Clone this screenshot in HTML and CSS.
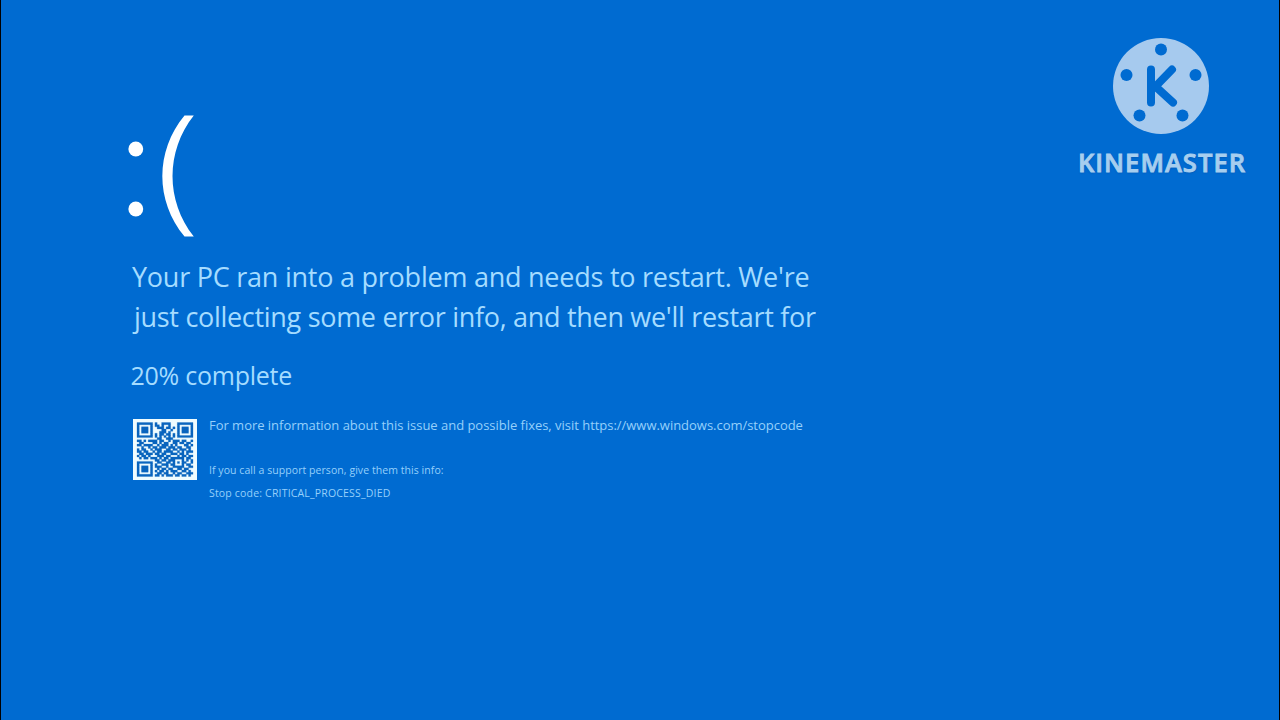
FILE: index.html
```html
<!DOCTYPE html>
<html lang="en">
<head>
<meta charset="utf-8">
<title>Stop screen</title>
<link rel="stylesheet" href="styles.css">
</head>
<body>
<main class="screen">
  <section class="message">
    <svg class="face" viewBox="0 0 70 124" role="img" aria-label="Sad face">
      <circle cx="7.800" cy="35" r="7.400"/><circle cx="7.800" cy="95" r="7.400"/>
      <path d="M56.500 1.500H65.800C37.500 37 37.500 87 65.800 122.500H56.500C27 87 27 37 56.500 1.500Z"/>
    </svg>
    <p class="headline"><span class="line-one">Your PC ran into a problem and needs to restart. We're</span><span class="line-two">just collecting some error info, and then we'll restart for</span></p>
    <p class="progress">20% complete</p>
    <div class="details">
      <svg class="qr" viewBox="0 0 64 61" preserveAspectRatio="none" role="img" aria-label="QR code">
        <rect width="64" height="61"/>
        <path id="modules" class="modules" transform="translate(4 3.500) scale(2.240 2.160)"/>
      </svg>
      <div class="info">
        <p class="visit">For more information about this issue and possible fixes, visit https://www.windows.com/stopcode</p>
        <p class="support">If you call a support person, give them this info:</p>
        <p class="stopcode">Stop code: CRITICAL_PROCESS_DIED</p>
      </div>
    </div>
  </section>
  <aside class="brand">
    <svg class="reel" viewBox="0 0 98 98" aria-hidden="true">
      <circle class="disc" cx="49" cy="49" r="48"/>
      <g class="holes"><circle cx="49" cy="12.500" r="6"/><circle cx="14.500" cy="38" r="6"/><circle cx="83.500" cy="38" r="6"/><circle cx="27.500" cy="78.500" r="6"/><circle cx="70.500" cy="78.500" r="6"/></g>
      <path class="letter" d="M39 32.500V65.500M60 32.500L43.500 49.500L61 65.500"/>
    </svg>
    <span class="name">KINEMASTER</span>
  </aside>
</main>
<script src="qr.js"></script>
</body>
</html>
```
FILE: styles.css
```css
* { box-sizing: border-box; }
body { margin: 0; background: #006bd1; }
p { margin: 0; white-space: nowrap; }
.screen {
  display: flex; justify-content: space-between;
  width: 1280px; height: 720px; overflow: hidden;
  padding: 37px 34px 0 127px;
  background: #006bd1;
  border: solid #000; border-width: 0 1px;
  font-family: "Open Sans", "Noto Sans", sans-serif;
  color: #a5dcff;
}
.message { padding-top: 77px; }
.face { display: block; width: 70px; height: 124px; fill: #fff; }
.headline { margin: 19px 0 0 4px; font-size: 27px; line-height: 40px; }
.headline span { display: block; }
.line-one { letter-spacing: -0.24px; }
.line-two { padding-left: 2px; letter-spacing: -0.3px; }
.progress { margin: 20px 0 0 2.500px; font-size: 25px; line-height: 36px; letter-spacing: -0.25px; }
.details { display: flex; gap: 12px; margin: 25px 0 0 5px; }
.qr { width: 64px; height: 61px; margin-top: 1px; fill: #effcff; }
.modules { fill: #0a66bf; stroke: #0a66bf; stroke-width: 0.12; }
.info { color: #96d0fb; }
.visit { font-size: 13px; line-height: 14px; letter-spacing: -0.025px; }
.support { margin-top: 31px; font-size: 10.500px; line-height: 14px; letter-spacing: 0.06px; }
.stopcode { margin-top: 9px; font-size: 10.500px; line-height: 14px; letter-spacing: 0.18px; }
.brand { display: flex; flex-direction: column; align-items: center; color: #a6ceef; }
.reel { width: 98px; height: 98px; }
.disc { fill: #a6caee; }
.holes { fill: #006bd1; }
.letter { fill: none; stroke: #006bd1; stroke-width: 8; stroke-linecap: round; stroke-linejoin: round; }
.name {
  margin: 12px -1px 0 0;
  font: 600 25.500px/30px "Open Sans", sans-serif;
  letter-spacing: 1.050px;
  -webkit-text-stroke: 0.900px #a6ceef;
  text-shadow: 0 1px 2px rgba(0, 50, 120, 0.35);
}
```
FILE: qr.js
```js
// Each string is one row of modules; 1 is dark.
const rows = [
  "1111111010011110001111111",
  "1000001011010010001000001",
  "1011101001110110101011101",
  "1011101000011001001011101",
  "1011101000111010001011101",
  "1000001010110110101000001",
  "1111111010101010101111111",
  "0000000001100111000000000",
  "1101011110110010111011001",
  "0110000110101100110110110",
  "1101111001011101010001101",
  "0010010110111011101100110",
  "1011001011100110110111010",
  "1101100101101111001010111",
  "0110111011011001110110100",
  "1011010001110110001011011",
  "0101101110101101111110110",
  "0000000011011011100010101",
  "1111111001100110101011001",
  "1000001010011101100010110",
  "1011101011100100111110011",
  "1011101001011011001101100",
  "1011101010110101110011010",
  "1000001001101100101100111",
  "1111111011010111011011010"
];

const d = rows.flatMap((row, y) =>
  [...row.matchAll(/1+/g)].map(m => `M${m.index} ${y}h${m[0].length}v1h-${m[0].length}z`)
).join("");
document.getElementById("modules").setAttribute("d", d);
```
